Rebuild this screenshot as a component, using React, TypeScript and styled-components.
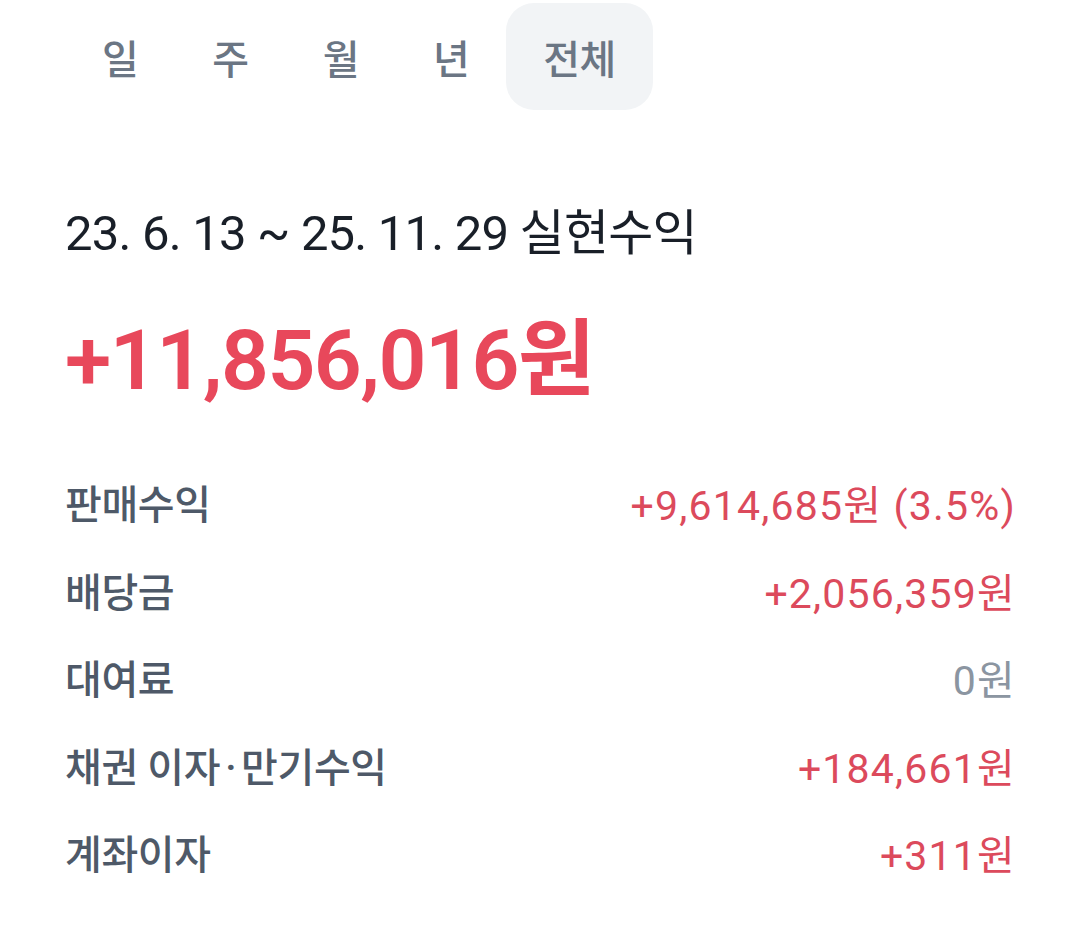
import React from "react";
import styled, { createGlobalStyle } from "styled-components";

const GlobalStyle = createGlobalStyle`
  html, body {
    margin: 0;
    padding: 0;
    background: #ffffff;
  }
  body {
    font-family: Roboto, "Noto Sans CJK KR", sans-serif;
    -webkit-font-smoothing: antialiased;
  }
`;

const Page = styled.div`
  width: 1079px;
  min-height: 941px;
  box-sizing: border-box;
  padding: 3px 64px 0 65px;
  background: #ffffff;
`;

const TabBar = styled.div`
  display: flex;
  align-items: center;
`;

const Tab = styled.button<{ $active?: boolean }>`
  height: 107px;
  padding: 0 37px;
  border: none;
  border-radius: 28px;
  background: ${({ $active }) => ($active ? "#f2f4f6" : "transparent")};
  color: #6b7684;
  font-family: inherit;
  font-size: 40px;
  font-weight: 500;
  letter-spacing: -0.5px;
  cursor: pointer;
`;

const Period = styled.h2`
  margin: 95px 0 0;
  color: #191f28;
  font-size: 49px;
  font-weight: 400;
  letter-spacing: -0.8px;
  line-height: 1.2;
`;

const Total = styled.div`
  margin-top: 47px;
  color: #e8485b;
  font-size: 84px;
  font-weight: 600;
  letter-spacing: -1.5px;
  line-height: 1.2;
`;

const List = styled.ul`
  list-style: none;
  margin: 47px 0 0;
  padding: 0;
  display: flex;
  flex-direction: column;
`;

const Row = styled.li`
  display: flex;
  justify-content: space-between;
  align-items: center;
  height: 87.5px;
`;

const Label = styled.span`
  color: #4e5968;
  font-size: 40px;
  font-weight: 500;
  letter-spacing: -0.4px;
`;

const Dot = styled.span`
  margin: 0 5px;
`;

const Value = styled.span<{ $muted?: boolean }>`
  color: ${({ $muted }) => ($muted ? "#8b95a1" : "#dc4a5c")};
  font-size: 41px;
  font-weight: 400;
  letter-spacing: 1.2px;
  margin-right: -1px;
`;

const tabs = ["일", "주", "월", "년", "전체"];

const rows: { label: React.ReactNode; key: string; value: string; muted?: boolean }[] = [
  { key: "sale", label: "판매수익", value: "+9,614,685원 (3.5%)" },
  { key: "div", label: "배당금", value: "+2,056,359원" },
  { key: "rent", label: "대여료", value: "0원", muted: true },
  {
    key: "bond",
    label: (
      <>
        채권 이자<Dot>·</Dot>만기수익
      </>
    ),
    value: "+184,661원",
  },
  { key: "acct", label: "계좌이자", value: "+311원" },
];

export default function App() {
  return (
    <>
      <GlobalStyle />
      <Page>
        <TabBar>
          {tabs.map((t) => (
            <Tab key={t} $active={t === "전체"}>
              {t}
            </Tab>
          ))}
        </TabBar>
        <Period>23. 6. 13 ~ 25. 11. 29 실현수익</Period>
        <Total>+11,856,016원</Total>
        <List>
          {rows.map((r) => (
            <Row key={r.key}>
              <Label>{r.label}</Label>
              <Value $muted={r.muted}>{r.value}</Value>
            </Row>
          ))}
        </List>
      </Page>
    </>
  );
}
